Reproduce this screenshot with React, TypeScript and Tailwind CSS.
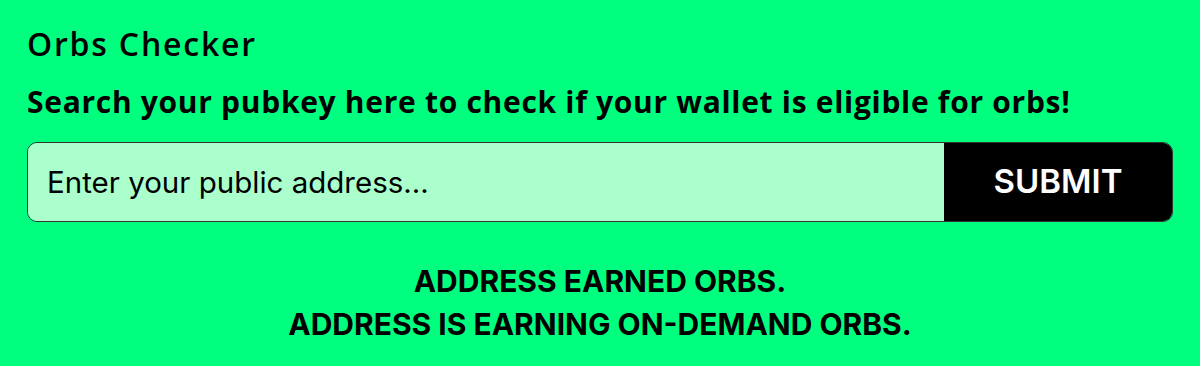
import React from 'react';

export default function App() {
    return (
        <div className="min-h-[366px] w-full bg-[#00ff7f] px-[27px] pt-[24px] text-black">
            <h1 className="font-['Open_Sans',sans-serif] text-[32px] font-semibold leading-[40px] tracking-[1.8px]">Orbs Checker</h1>
            <h2 className="mt-[18px] font-['Open_Sans',sans-serif] text-[30px] font-bold leading-[40px] tracking-[0.7px]">
                Search your pubkey here to check if your wallet is eligible for orbs!
            </h2>
            <form className="mt-[20px] flex h-[80px] w-full overflow-hidden rounded-[10px] border border-[#333]">
                <input
                    type="text"
                    autoFocus
                    placeholder="Enter your public address..."
                    className="min-w-0 flex-1 bg-[#aaffcc] px-[19px] font-['Inter',sans-serif] text-[29.5px] text-black caret-black outline-none placeholder:text-black"
                />
                <button type="button" className="w-[228px] bg-black font-['Inter',sans-serif] text-[33px] font-semibold text-white">
                    SUBMIT
                </button>
            </form>
            <div className="mt-[38px] text-center font-['Inter',sans-serif] text-[30px] font-bold leading-[43px]">
                <p>ADDRESS EARNED ORBS.</p>
                <p>ADDRESS IS EARNING ON-DEMAND ORBS.</p>
            </div>
        </div>
    );
}
